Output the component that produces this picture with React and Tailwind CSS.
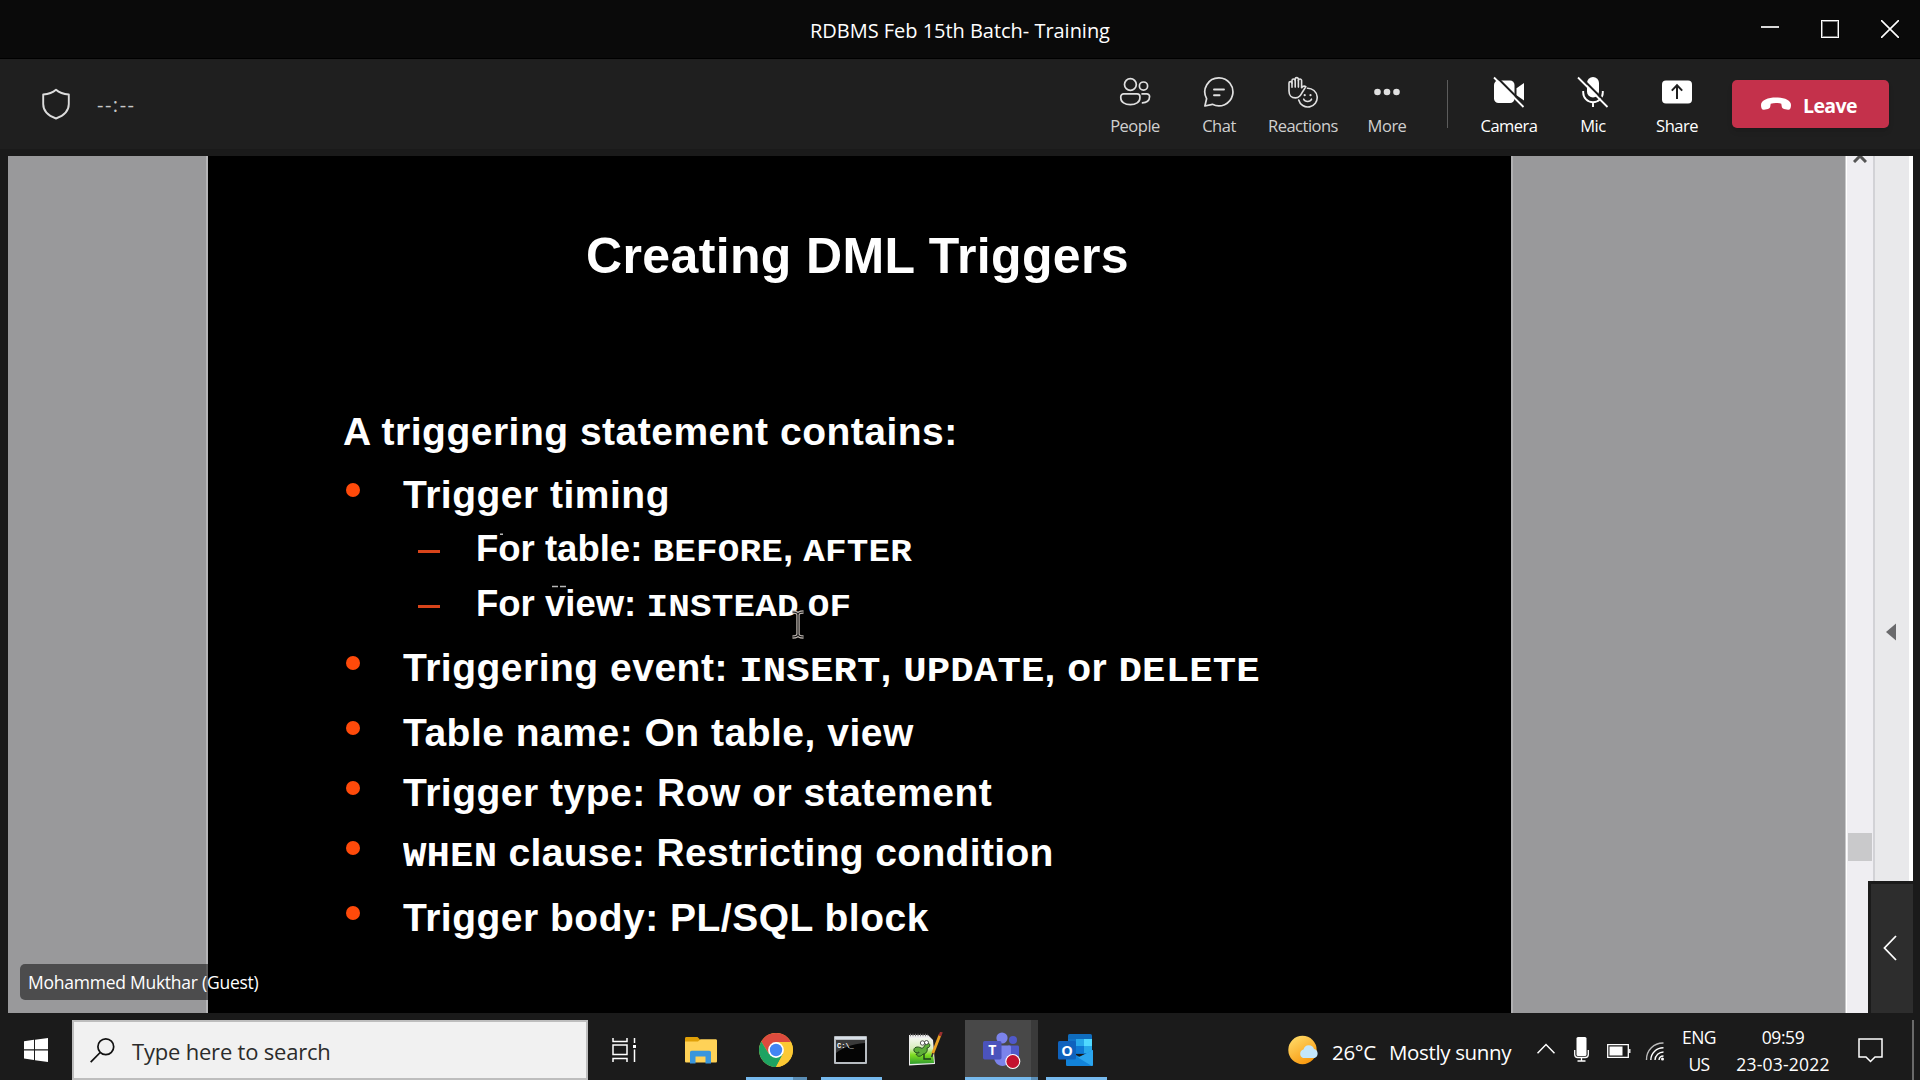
const SANS = "font-['Open_Sans','Noto_Sans',sans-serif]";

function PeopleIcon() {
  return (
    <svg width="32" height="32" viewBox="0 0 32 32" fill="none" stroke="#e0e0e0" strokeWidth="1.7">
      <circle cx="11.4" cy="8.5" r="5.9" />
      <circle cx="24.5" cy="10.1" r="4.1" />
      <path d="M4.9 17.8h13.2a2.8 2.8 0 0 1 2.8 2.8v1.3c0 4.2-4.2 6.8-9.6 6.8S1.8 26.1 1.8 21.9v-1.3a2.8 2.8 0 0 1 3.1-2.8Z" />
      <path d="M22.4 17.8h5.4a2.8 2.8 0 0 1 2.8 2.8c0 4-2.9 6.4-7.8 6.2" />
    </svg>
  );
}

function ChatIcon() {
  return (
    <svg width="32" height="32" viewBox="0 0 32 32" fill="none" stroke="#e0e0e0" strokeWidth="1.7" strokeLinecap="round" strokeLinejoin="round">
      <path d="M16 1.9a14 14 0 1 1-6.6 26.4L1.9 30l1.7-7.3A14 14 0 0 1 16 1.9Z" />
      <path d="M11 13.5h10M11 19.3h5.6" strokeWidth="1.9" />
    </svg>
  );
}

function ReactionsIcon() {
  return (
    <svg width="32" height="32" viewBox="0 0 32 32" fill="none" stroke="#e0e0e0" strokeWidth="1.6" strokeLinecap="round" strokeLinejoin="round">
      <path d="M12.5 20.3c-1 1-2.5 1.6-4 1.6-4.3 0-6.5-3-6.5-7V7.1a1.5 1.5 0 0 1 3 0V4.6a1.6 1.6 0 0 1 3.2 0V3.2a1.6 1.6 0 0 1 3.2 0v1.4a1.6 1.6 0 0 1 3.2 0v7.2c1-1.4 2.6-2 4.3-1.2l-3.6 5.6c-1 1.6-1.7 3-2.8 4.1Z" />
      <path d="M5 7v4.3M8.2 4.6v6.5M11.4 4.6v6.5" />
      <path d="M20.5 12.2a9.4 9.4 0 1 1-8.8 11.8" />
      <path d="M16.7 23.2c1.3 3 6.5 3 7.8 0" />
      <circle cx="17.7" cy="19.2" r="1.1" fill="#e0e0e0" stroke="none" />
      <circle cx="23.5" cy="19.2" r="1.1" fill="#e0e0e0" stroke="none" />
    </svg>
  );
}

function MoreIcon() {
  return (
    <svg width="32" height="32" viewBox="0 0 32 32" fill="#e0e0e0">
      <circle cx="6.5" cy="16" r="3.3" />
      <circle cx="16" cy="16" r="3.3" />
      <circle cx="25.5" cy="16" r="3.3" />
    </svg>
  );
}

function CameraIcon() {
  return (
    <svg width="32" height="32" viewBox="0 0 32 32">
      <rect x="1" y="4.5" width="20.5" height="22.5" rx="4.5" fill="#fff" />
      <path d="M23.5 12.2 31 7v17.5l-7.5-5.2Z" fill="#fff" />
      <path d="M2.5 0 32.5 30" stroke="#1f1f1f" strokeWidth="2.2" />
      <path d="M1 1.5 30.5 31" stroke="#fff" strokeWidth="1.8" />
    </svg>
  );
}

function MicIcon() {
  return (
    <svg width="32" height="32" viewBox="0 0 32 32">
      <rect x="10" y="1" width="12" height="20.5" rx="6" fill="#fff" />
      <path d="M6.2 15v1.5a9.8 9.8 0 0 0 19.6 0V15M16 26.5V31" fill="none" stroke="#fff" strokeWidth="1.9" />
      <path d="M2.5 0 32.5 30" stroke="#1f1f1f" strokeWidth="2.2" />
      <path d="M1 1.5 30.5 31" stroke="#fff" strokeWidth="1.8" />
    </svg>
  );
}

function ShareIcon() {
  return (
    <svg width="32" height="32" viewBox="0 0 32 32">
      <rect x="1" y="4.5" width="30" height="23" rx="4" fill="#fff" />
      <path d="M16 23V9.5M10.8 14.6 16 9.3l5.2 5.3" fill="none" stroke="#1f1f1f" strokeWidth="2" />
    </svg>
  );
}

function Tool({ icon, label, text }) {
  return (
    <div className="flex w-[84px] flex-col items-center">
      <div className="h-8 w-8">{icon}</div>
      <span className={`mt-1.5 h-6 whitespace-nowrap text-[16.5px] leading-6 tracking-[-0.5px] ${text}`}>{label}</span>
    </div>
  );
}

function TitleBar() {
  return (
    <header className="grid h-[59px] grid-cols-3 items-center border-b border-black bg-[#0a0a0a]">
      <span />
      <span className="pt-1 text-center text-[20px] tracking-[-0.03px] text-white">RDBMS Feb 15th Batch- Training</span>
      <div className="flex items-center justify-end gap-[42px] pr-[21px]">
        <div className="mb-1 h-0.5 w-[18px] bg-[#d8d8d8]" />
        <div className="h-[18px] w-[18px] border border-white shadow-[inset_0_0_0_1px_#777777]" />
        <svg width="18" height="18" viewBox="0 0 18 18" stroke="#fff" strokeWidth="1.6">
          <path d="M0 0 18 18M18 0 0 18" />
        </svg>
      </div>
    </header>
  );
}

function Toolbar() {
  return (
    <div className="flex h-[90px] shrink-0 items-start bg-[#1f1f1f]">
      <svg className="ml-[40px] mt-[28px]" width="32" height="34" viewBox="0 0 32 34" fill="none" stroke="#dcdcdc" strokeWidth="1.9" strokeLinejoin="round">
        <path d="M16 2.8c3.3 2.9 7.200 4.300 12.800 4.700v9.500c0 6.500-4.300 11.500-12.800 14.500C7.500 28.500 3.200 23.500 3.200 17V7.500C8.800 7.100 12.700 5.700 16 2.800Z" />
      </svg>
      <span className="ml-[25px] mt-[33px] text-[20px] leading-[26px] tracking-[1.5px] text-[#c8c8c8]">--:--</span>
      <div className="ml-auto mt-[17px] flex items-start">
        <Tool icon={<PeopleIcon />} label="People" text="text-[#d0d0d0]" />
        <Tool icon={<ChatIcon />} label="Chat" text="text-[#d0d0d0]" />
        <Tool icon={<ReactionsIcon />} label="Reactions" text="text-[#d0d0d0]" />
        <Tool icon={<MoreIcon />} label="More" text="text-[#d0d0d0]" />
        <div className="ml-[18px] mr-[19px] mt-1 h-12 w-px bg-[#5c5c5c]" />
        <Tool icon={<CameraIcon />} label="Camera" text="text-white" />
        <Tool icon={<MicIcon />} label="Mic" text="text-white" />
        <Tool icon={<ShareIcon />} label="Share" text="text-white" />
      </div>
      <button className="ml-[13px] mr-[31px] mt-[21px] flex h-12 w-[157px] items-center rounded-[5px] bg-[#c4314b] pl-[29px] shadow-md">
        <svg width="30" height="14" viewBox="0 0 30 14" fill="#fff">
          <path d="M15 .5C23 .5 30 3 30 8c0 3.500-1 5-3 4.700l-4-.8c-1.500-.3-2.100-1.200-2.300-2.600l-.4-2.500C17 5.600 13 5.600 9.700 6.800l-.4 2.500C9.100 10.700 8.500 11.600 7 11.900l-4 .8C1 13 0 11.500 0 8 0 3 7 .5 15 .5Z" />
        </svg>
        <span className="ml-3 pt-[3px] text-[19.5px] font-bold tracking-[-0.6px] text-white">Leave</span>
      </button>
    </div>
  );
}

/* SQL keyword in monospace, slightly flattened around its baseline */
function Code({ size = "text-[39px]", children }) {
  return (
    <span className={`inline-block origin-[0_76%] scale-y-[0.88] font-['Liberation_Mono',monospace] font-bold tracking-[0.15px] ${size}`}>{children}</span>
  );
}

function Bullet({ top, tracking = "tracking-[0.5px]", children }) {
  return (
    <li className={`flex h-10 items-start whitespace-pre text-[39px] leading-10 ${tracking} ${top}`}>
      <span className="ml-[3px] mr-[43px] mt-2.5 h-3.5 w-3.5 rounded-full bg-[#ff4a0a]" />
      <span className="mt-0.5">{children}</span>
    </li>
  );
}

function SubBullet({ top, children }) {
  return (
    <li className={`flex h-10 items-start whitespace-pre text-[36.5px] leading-10 ${top}`}>
      <span className="ml-[75px] mr-[36px] mt-[22px] h-[3px] w-[22px] bg-[#d8441a]" />
      <span className="mt-px">{children}</span>
    </li>
  );
}

function Slide() {
  return (
    <section className="w-[1303px] bg-black pl-[135px] font-['Liberation_Sans',Arial,sans-serif] font-bold text-white">
      <h1 className="ml-[243px] mt-[72px] h-14 whitespace-nowrap text-[50px] leading-[56px] tracking-[0.37px]">Creating DML Triggers</h1>
      <p className="mt-[128px] h-10 whitespace-nowrap text-[39px] leading-10 tracking-[0.5px]">A triggering statement contains:</p>
      <ul>
        <Bullet top="mt-[21px]">Trigger timing</Bullet>
        <SubBullet top="mt-[15px]">For table: <Code size="text-[36px]">BEFORE</Code>, <Code size="text-[36px]">AFTER</Code></SubBullet>
        <SubBullet top="mt-[15px]">For view: <Code size="text-[36px]">INSTEAD</Code><span className="ml-[9px]"><Code size="text-[36px]">OF</Code></span></SubBullet>
        <Bullet top="mt-[23px]">Triggering event: <Code>INSERT</Code>, <Code>UPDATE</Code>, or <Code>DELETE</Code></Bullet>
        <Bullet top="mt-[25px]">Table name: On table, view</Bullet>
        <Bullet top="mt-[20px]">Trigger type: Row or statement</Bullet>
        <Bullet top="mt-[20px]" tracking="tracking-[0.35px]"><Code>WHEN</Code> clause: Restricting condition</Bullet>
        <Bullet top="mt-[25px]">Trigger body: PL/SQL block</Bullet>
      </ul>
    </section>
  );
}

function SharedScreen() {
  return (
    <main className="relative mx-[8px] mt-[7px] flex h-[857px] w-[1905px] overflow-hidden">
      <div className="w-[200px] border-r-2 border-[#b4b4b6] bg-[#99999b]" />
      <Slide />
      <div className="w-[335px] border-l-2 border-r border-l-[#b0b0b2] border-r-[#c8c8ca] bg-[#99999b]" />
      <div className="flex w-[27px] flex-col items-center border-l border-white bg-[#efeef2]">
        <svg width="14" height="7" viewBox="0 0 14 7" fill="none" stroke="#555" strokeWidth="3">
          <path d="M1 6 7 0l6 6" />
        </svg>
        <div className="mt-[670px] h-7 w-6 bg-[#c9c9cb]" />
      </div>
      <div className="flex w-[40px] items-start justify-center border-l-2 border-r-4 border-l-[#d2d2d6] border-r-white bg-[#e9e9eb]">
        <svg className="mr-0.5 mt-[467px]" width="10" height="18" viewBox="0 0 10 18" fill="#6a6a6c">
          <path d="M10 .5v17L0 9Z" />
        </svg>
      </div>
      <div className="absolute left-3 top-[808px] flex h-9 w-[248px] items-center rounded-[5px] bg-black/50 pl-2">
        <span className="whitespace-nowrap text-[17.5px] tracking-[-0.25px] text-white">Mohammed Mukthar (Guest)</span>
      </div>
      <button className="absolute bottom-0 right-0 flex h-[132px] w-[45px] items-center justify-center border-l-[3px] border-t-[3px] border-[#1b1b1b] bg-[#2d2d2d]">
        <svg className="mb-0.5 mr-1" width="14" height="26" viewBox="0 0 14 26" fill="none" stroke="#fff" strokeWidth="1.8">
          <path d="M13 1 1.5 13 13 25" />
        </svg>
      </button>
      <svg className="absolute left-[492px] top-[377px]" width="76" height="56" viewBox="0 0 76 56" stroke="#b8b8b8" strokeWidth="1.5">
        <path d="M0 1.200h3M52 53.500h6M60 53.500h6" />
      </svg>
      <svg className="absolute left-[783px] top-[454px]" width="14" height="29" viewBox="0 0 14 29" fill="none">
        <path d="M1.5 2c3 0 5.500.5 5.500 3v19c0 2.500-2.500 3-5.500 3M12.500 2C9.500 2 7 2.500 7 5v19c0 2.500 2.500 3 5.500 3" stroke="#c0b8b2" strokeWidth="3.4" />
        <path d="M1.5 2c3 0 5.500.5 5.500 3v19c0 2.500-2.500 3-5.500 3M12.500 2C9.500 2 7 2.500 7 5v19c0 2.500 2.500 3 5.500 3" stroke="#151515" strokeWidth="1.1" />
      </svg>
    </main>
  );
}

function ExplorerIcon() {
  return (
    <svg width="32" height="32" viewBox="0 0 32 32">
      <path d="M0 4.500C0 3.500.5 3 1.500 3h11l2.500 2.500V10H0Z" fill="#e0a008" />
      <path d="M0 7.500h13l2.500-2.300H30.500c1 0 1.500.5 1.500 1.500V27c0 1-.5 1.500-1.500 1.500h-29C.5 28.500 0 28 0 27Z" fill="#ffd257" />
      <path d="M5 29.500V18.500c0-1 .7-1.700 1.700-1.700h17.600c1 0 1.700.7 1.700 1.700v11h-5.500v-7h-10v7Z" fill="#3a96dd" />
    </svg>
  );
}

function ChromeIcon() {
  return (
    <svg width="34" height="34" viewBox="0 0 34 34">
      <circle cx="17" cy="17" r="17" fill="#fcc934" />
      <path d="M17 9h14.900A17 17 0 0 0 2.300 8.500L10 21Z" fill="#dd4b3e" />
      <path d="M2.300 8.500A17 17 0 0 0 17 34l7-13-14 0Z" fill="#1ea362" />
      <path d="M17 34A17 17 0 0 0 32 9H17l7 12Z" fill="#fcc934" />
      <circle cx="17" cy="17" r="7.9" fill="#fff" />
      <circle cx="17" cy="17" r="6.2" fill="#4285f4" />
    </svg>
  );
}

function TerminalIcon() {
  return (
    <svg width="33" height="28" viewBox="0 0 33 28">
      <rect width="33" height="28" rx="1" fill="#b8bdc2" />
      <rect x="1" y="1" width="31" height="2" fill="#d8e0e8" />
      <rect x="2" y="4" width="29" height="22" fill="#050505" />
      <path d="M2 4h29v3C18 8 8 12 2 17Z" fill="#3a3a3a" />
      <text x="3" y="11.5" fontSize="7" fill="#fff" fontFamily="Liberation Mono, monospace" fontWeight="bold">C:\_</text>
    </svg>
  );
}

function NotepadIcon() {
  return (
    <svg width="35" height="35" viewBox="0 0 35 35">
      <defs>
        <linearGradient id="grass" x1="0" y1="0" x2="0" y2="1">
          <stop offset="0" stopColor="#f4f8f0" />
          <stop offset="0.4" stopColor="#d8eebc" />
          <stop offset="0.65" stopColor="#7fdc20" />
          <stop offset="1" stopColor="#2f9c2f" />
        </linearGradient>
      </defs>
      <path d="M1 3h19l5 5 2 24-26 1.500Z" fill="#eee" />
      <path d="M2 6h18l4 3 2 22-24 1Z" fill="url(#grass)" />
      <path d="M2 3h18" stroke="#777" strokeWidth="2.5" strokeDasharray="1 1.5" />
      <path d="M6 19c-1-4 4-5 7-3s4-6 7-5c3 1 2 5-1 5 1 3-1 6-4 6-2 3-6 3-7 0 2 0 3-1 3-2-2 1-4 1-5-1Z" fill="#5fae3a" stroke="#234d1c" />
      <circle cx="14.5" cy="11" r="2.2" fill="#fff" stroke="#333" strokeWidth=".8" />
      <circle cx="18.5" cy="10.5" r="2" fill="#fff" stroke="#333" strokeWidth=".8" />
      <path d="M16 22v5h7" fill="none" stroke="#1c3c1c" strokeWidth="1.4" />
      <path d="M32 3 24.500 22" stroke="#e8a020" strokeWidth="2.8" />
      <path d="m33.500 0-1.700 4" stroke="#9b3030" strokeWidth="2.8" />
      <path d="m25 21-1.400 4" stroke="#333" strokeWidth="1.5" />
    </svg>
  );
}

function TeamsIcon() {
  return (
    <svg width="40" height="40" viewBox="0 0 40 40">
      <circle cx="30" cy="10" r="4" fill="#5059c9" />
      <path d="M25 15.500h9.500c.9 0 1.500.6 1.500 1.500v8c0 4-3 7-6.500 7S25 29 25 25Z" fill="#5059c9" />
      <circle cx="19" cy="8" r="5.6" fill="#7b83eb" />
      <path d="M11 15.500h15.500c.9 0 1.500.6 1.500 1.500v10c0 5.500-4 9-8.500 9S11 32 11 27Z" fill="#7b83eb" />
      <rect x="0" y="11" width="18.5" height="18.5" rx="1.7" fill="#4b53bc" />
      <text x="9.2" y="25.2" textAnchor="middle" fontSize="14" fontWeight="bold" fill="#fff" fontFamily="Open Sans, sans-serif">T</text>
      <circle cx="29.8" cy="31.5" r="7.5" fill="#fff" />
      <circle cx="29.8" cy="31.5" r="6.4" fill="#c4122f" />
    </svg>
  );
}

function OutlookIcon() {
  return (
    <svg width="36" height="34" viewBox="0 0 36 34">
      <rect x="10" y="1" width="24" height="20" rx="1.5" fill="#0f6cbd" />
      <path d="M10 6h8v7h-8Z" fill="#1373c8" />
      <path d="M18 6h8v7h-8Z" fill="#28a8ea" />
      <path d="M26 6h8v7h-8Z" fill="#50d9ff" />
      <path d="M18 13h8v7h-8Z" fill="#0f78d4" />
      <path d="M26 13h8v7h-8Z" fill="#28a8ea" />
      <path d="M8 18h2l12 6 13-7v14.500c0 1-.6 1.500-1.500 1.500h-24c-1 0-1.500-.5-1.500-1.500Z" fill="#1283da" />
      <path d="M20 24.500 35 17v14.500c0 .8-.4 1.300-1.200 1.500Z" fill="#2ba5ee" />
      <rect x="0" y="8" width="18" height="18.5" rx="1.5" fill="#0f62bd" />
      <text x="9" y="22.5" textAnchor="middle" fontSize="14.5" fontWeight="bold" fill="#fff" fontFamily="Open Sans, sans-serif">O</text>
    </svg>
  );
}

function TaskButton({ icon, width, bg = "", bar = "", pad = "" }) {
  return (
    <div className={`flex h-[60px] flex-col ${width} ${bg}`}>
      <div className={`flex h-[57px] items-center justify-center pt-[2px] ${pad}`}>{icon}</div>
      <div className={`h-[3px] ${bar}`} />
    </div>
  );
}

function Taskbar() {
  return (
    <footer className="mt-[7px] flex h-[60px] items-start bg-[#1b1b1b] text-white">
      <div className="flex h-full w-[72px] items-center justify-center">
        <svg width="24" height="24" viewBox="0 0 24 24" fill="#fff">
          <path d="M0 3.300 10 1.800v9.500H0ZM11 1.700 24 0v11.300H11ZM0 12.400h10v9.500L0 20.500ZM11 12.400h13V24l-13-1.800Z" />
        </svg>
      </div>
      <div className="flex h-[60px] w-[516px] items-center border-2 border-[#bdbdbd] bg-[#f1f1f1]">
        <svg className="ml-4" width="25" height="25" viewBox="0 0 25 25" fill="none" stroke="#111" strokeWidth="1.7">
          <circle cx="15.8" cy="8.8" r="7.9" />
          <path d="M10.200 14.500.7 24.200" />
        </svg>
        <span className="ml-[17px] pt-[3px] text-[22px] tracking-[-0.2px] text-[#2b2b2b]">Type here to search</span>
      </div>
      <div className="flex h-full w-[73px] items-center justify-center">
        <svg width="25" height="24" viewBox="0 0 25 24" fill="none" stroke="#fff" strokeWidth="1.5">
          <path d="M1 0v3.500h14V0M1 24v-3.500h14V24M1 7h14v9.500H1ZM22.500 0v5M22.500 11.500V24" />
          <path d="M21 7h3v3h-3Z" fill="#fff" stroke="none" />
        </svg>
      </div>
      <TaskButton icon={<ExplorerIcon />} width="w-[80px]" />
      <div className="w-[5px]" />
      <TaskButton icon={<ChromeIcon />} width="w-[47px]" bar="bg-[#76b9ed]" pad="pl-[13px]" />
      <TaskButton width="w-[14px]" bar="bg-[#5a8db5]" />
      <div className="w-[14px]" />
      <TaskButton icon={<TerminalIcon />} width="w-[61px]" bar="bg-[#76b9ed]" pad="pr-[2px]" />
      <TaskButton icon={<NotepadIcon />} width="w-[83px]" pad="pl-1" />
      <TaskButton icon={<TeamsIcon />} width="w-[66px]" bg="bg-[#484848]" bar="bg-[#76b9ed]" pad="pl-[10px]" />
      <TaskButton width="w-[7px]" bg="bg-[#3a3a3a]" bar="bg-[#5a8db5]" />
      <div className="w-[8px]" />
      <TaskButton icon={<OutlookIcon />} width="w-[61px]" bar="bg-[#76b9ed]" pad="pr-[2px]" />

      <div className="ml-auto flex h-full items-center">
        <svg width="32" height="30" viewBox="0 0 32 30">
          <defs>
            <linearGradient id="sun" x1="0" y1="0" x2="0.6" y2="1">
              <stop offset="0" stopColor="#ffe070" />
              <stop offset="1" stopColor="#f99a10" />
            </linearGradient>
          </defs>
          <circle cx="14.5" cy="15" r="14.2" fill="url(#sun)" />
          <path d="M15 23a4.500 4.500 0 0 1 .5-8.500 5.500 5.500 0 0 1 10.500-.5 4.700 4.700 0 0 1 .5 9Z" fill="#c3e6fb" />
        </svg>
        <span className="ml-3 w-[57px] whitespace-nowrap pt-1 text-[20.5px] tracking-[-0.3px]">26°C</span>
        <span className="w-[148px] whitespace-nowrap pt-1 text-[20.5px] tracking-[-0.35px]">Mostly sunny</span>
        <svg className="mb-1" width="18" height="11" viewBox="0 0 18 11" fill="none" stroke="#fff" strokeWidth="1.5">
          <path d="M.5 10.200 9 1.500l8.500 8.700" />
        </svg>
        <svg className="mb-0.5 ml-[19px]" width="15" height="25" viewBox="0 0 15 25" fill="none" stroke="#fff" strokeWidth="1.3">
          <rect x="2.5" y="0" width="10" height="19" rx="1.5" fill="#fff" stroke="none" />
          <path d="M.7 13v4.500c0 2 1 3 3 3h7.600c2 0 3-1 3-3V13M7.500 20.500v3M3.500 24h8" />
        </svg>
        <svg className="ml-[18px] mt-0.5" width="24" height="14" viewBox="0 0 24 14" fill="none" stroke="#fff" strokeWidth="1.3">
          <path d="M.7.7h20.600v12.600H.7ZM22.800 5v4" />
          <rect x="2.5" y="2.5" width="13" height="9" fill="#fff" stroke="none" />
        </svg>
        <svg className="ml-[14px] mt-0.5" width="20" height="19" viewBox="0 0 20 19" fill="none" stroke="#fff" strokeWidth="1.4">
          <path d="M1.500 18A16.500 16.500 0 0 1 18.500 1" opacity=".7" />
          <path d="M5.800 18A12.500 12.500 0 0 1 18.500 5.800" />
          <path d="M10 18a8.500 8.500 0 0 1 8.500-8" />
          <path d="M14 18a4.500 4.500 0 0 1 4.500-4" />
          <circle cx="17.5" cy="17" r="1.5" fill="#fff" stroke="none" />
        </svg>
        <div className="ml-[10px] flex w-[48px] flex-col items-center pt-0.5 text-[17.5px] leading-[27px] tracking-[-0.6px]">
          <span>ENG</span>
          <span>US</span>
        </div>
        <div className="ml-[10px] flex w-[100px] flex-col items-center whitespace-nowrap pt-0.5 text-[17.5px] leading-[27px]">
          <span className="tracking-[-0.4px]">09:59</span>
          <span className="tracking-[0.2px]">23-03-2022</span>
        </div>
        <svg className="ml-[25px] mr-[29px]" width="25" height="25" viewBox="0 0 25 25" fill="none" stroke="#fff" strokeWidth="1.5">
          <path d="M1 1h23v18h-7l-4.500 4.500L8 19H1Z" />
        </svg>
        <div className="mr-[6px] h-full w-0.5 bg-[#6a6a6a]" />
      </div>
    </footer>
  );
}

export default function App() {
  return (
    <div className={`flex h-[1080px] w-[1920px] flex-col overflow-hidden bg-[#1a1a1a] ${SANS}`}>
      <TitleBar />
      <Toolbar />
      <SharedScreen />
      <Taskbar />
    </div>
  );
}
